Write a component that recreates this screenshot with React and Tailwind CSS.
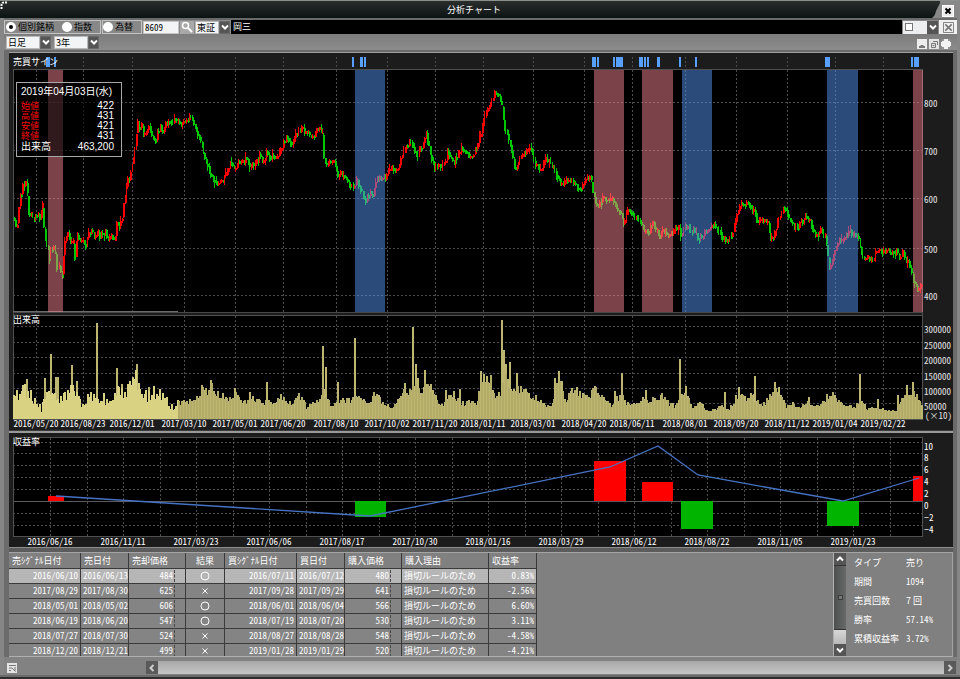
import React from "react";

const HALF =
  "[font-family:'Noto_Sans_CJK_JP',sans-serif] [font-feature-settings:'hwid']";
const GOTHIC = "[font-family:'Noto_Sans_CJK_JP',sans-serif]";
const PGOTHIC = "[font-family:'Liberation_Sans','Noto_Sans_CJK_JP',sans-serif]";

/* ---------- chart data (plot units) ---------- */

const PRICE_PATH = [
  [14, 218], [16, 228], [19, 205], [20, 195], [24, 185], [26, 182], [27, 200], [29, 220], [31, 215], [33, 225],
  [35, 217], [38, 213], [40, 218], [42, 208], [43, 222], [44, 240], [47, 248], [49, 260], [51, 250], [54, 242],
  [55, 265], [57, 272], [59, 265], [62, 275], [64, 242], [68, 236], [70, 240], [73, 245], [74, 260], [77, 234],
  [80, 240], [83, 245], [86, 248], [88, 236], [92, 232], [95, 240], [98, 232], [101, 236], [105, 230], [108, 238],
  [112, 238], [115, 236], [117, 220], [119, 225], [121, 222], [123, 210], [125, 192], [127, 180], [129, 178],
  [131, 168], [133, 162], [135, 140], [137, 122], [139, 128], [141, 125], [144, 135], [147, 128], [150, 128],
  [153, 142], [156, 138], [159, 127], [163, 132], [167, 120], [171, 122], [175, 118], [180, 125], [184, 120],
  [188, 118], [191, 117], [193, 122], [196, 132], [200, 138], [202, 148], [205, 158], [208, 168], [210, 175],
  [213, 178], [218, 185], [221, 182], [224, 178], [227, 170], [230, 162], [233, 165], [235, 172], [237, 160],
  [240, 165], [243, 162], [247, 158], [250, 170], [252, 165], [256, 160], [259, 155], [263, 165], [266, 148],
  [269, 158], [273, 155], [277, 155], [280, 150], [283, 143], [287, 137], [290, 143], [293, 140], [297, 133],
  [302, 128], [307, 133], [311, 138], [315, 133], [318, 130], [320, 128], [322, 133], [323, 155], [325, 165],
  [328, 163], [332, 160], [335, 165], [337, 178], [341, 173], [345, 180], [350, 185], [354, 186], [357, 178],
  [360, 190], [363, 198], [366, 200], [369, 192], [372, 196], [375, 182], [377, 177], [380, 180], [385, 177],
  [390, 170], [394, 168], [398, 170], [401, 156], [405, 148], [408, 143], [412, 142], [415, 155], [419, 150],
  [423, 143], [425, 132], [428, 142], [431, 158], [434, 167], [438, 165], [442, 168], [447, 153], [450, 158],
  [453, 163], [456, 157], [460, 148], [464, 150], [468, 155], [472, 155], [476, 148], [480, 133], [483, 122],
  [487, 110], [490, 103], [494, 95], [496, 91], [499, 95], [501, 103], [503, 124], [505, 130], [508, 140],
  [511, 150], [513, 162], [516, 172], [520, 155], [524, 155], [528, 148], [531, 150], [534, 163], [538, 168],
  [541, 168], [545, 158], [549, 163], [553, 166], [556, 177], [561, 183], [565, 182], [569, 177], [573, 182],
  [577, 187], [581, 190], [585, 180], [590, 178], [592, 190], [595, 202], [599, 205], [603, 198], [608, 200],
  [612, 198], [616, 208], [620, 215], [623, 223], [626, 212], [630, 212], [634, 214], [638, 220], [641, 225],
  [643, 230], [648, 232], [652, 224], [656, 228], [659, 236], [662, 230], [666, 234], [670, 236], [674, 228],
  [678, 227], [681, 235], [685, 225], [690, 232], [694, 230], [698, 240], [702, 235], [706, 232], [711, 225],
  [715, 224], [718, 232], [722, 238], [727, 240], [731, 238], [734, 225], [737, 210], [741, 205], [745, 203],
  [749, 207], [753, 208], [756, 220], [760, 222], [764, 220], [768, 225], [770, 238], [773, 240], [776, 225],
  [780, 213], [784, 209], [788, 215], [792, 225], [797, 228], [801, 222], [806, 215], [809, 220], [812, 232],
  [817, 236], [820, 231], [825, 238], [827, 252], [828, 262], [829, 270], [832, 258], [835, 248], [838, 240],
  [842, 238], [846, 235], [850, 232], [854, 235], [858, 236], [860, 252], [863, 258], [867, 256], [870, 262],
  [874, 256], [878, 252], [884, 252], [890, 252], [896, 252], [899, 258], [903, 252], [907, 262], [911, 272],
  [914, 285], [917, 290], [921, 284],
];

const VOLUME_PATH = [
  [13, 22], [20, 25], [26, 30], [30, 22], [36, 15], [40, 10], [45, 25], [50, 25], [55, 20], [60, 20], [65, 25],
  [72, 28], [77, 22], [80, 14], [86, 20], [92, 24], [97, 22], [103, 20], [108, 16], [114, 24], [120, 26],
  [126, 26], [132, 36], [136, 40], [140, 28], [146, 22], [152, 27], [158, 24], [164, 20], [168, 14], [172, 12],
  [178, 16], [184, 16], [190, 17], [196, 22], [201, 28], [206, 26], [210, 34], [214, 26], [220, 24], [226, 18],
  [232, 22], [236, 24], [242, 16], [250, 20], [256, 18], [262, 14], [268, 18], [274, 16], [280, 22], [286, 16],
  [292, 16], [298, 22], [302, 18], [306, 10], [312, 18], [318, 16], [322, 28], [326, 22], [330, 12], [336, 18],
  [342, 18], [350, 18], [355, 26], [360, 20], [366, 16], [372, 22], [376, 26], [380, 18], [386, 14], [392, 10],
  [397, 18], [402, 26], [408, 22], [412, 38], [416, 36], [420, 26], [424, 32], [430, 30], [436, 18], [440, 12],
  [446, 20], [452, 24], [458, 18], [464, 14], [470, 18], [476, 12], [480, 42], [484, 38], [490, 38], [494, 24],
  [500, 26], [504, 50], [508, 32], [514, 32], [520, 28], [526, 24], [532, 22], [540, 20], [546, 12], [552, 16],
  [556, 32], [560, 34], [564, 18], [570, 28], [576, 28], [582, 22], [588, 22], [594, 28], [600, 26], [606, 18],
  [610, 12], [616, 20], [622, 22], [626, 14], [632, 14], [638, 14], [642, 20], [650, 18], [656, 22], [662, 22],
  [668, 16], [674, 12], [680, 28], [686, 24], [692, 10], [698, 16], [704, 10], [710, 8], [716, 10], [722, 14],
  [728, 8], [734, 20], [738, 26], [744, 20], [750, 24], [756, 18], [762, 14], [768, 20], [774, 32], [780, 20],
  [786, 12], [792, 16], [798, 10], [806, 16], [812, 12], [820, 14], [826, 22], [830, 26], [836, 18], [842, 16],
  [848, 12], [854, 12], [860, 18], [866, 10], [872, 12], [880, 10], [888, 8], [896, 10], [902, 20], [908, 28],
  [914, 24], [922, 14],
];

const VOLUME_SPIKES = [
  [26, 40], [44, 41], [50, 65], [55, 42], [57, 42], [71, 54], [76, 38], [96, 96], [116, 51], [121, 35],
  [132, 42], [136, 55], [138, 36], [148, 32], [153, 30], [201, 34], [210, 39], [234, 31], [249, 27], [266, 37],
  [322, 73], [325, 52], [337, 37], [354, 81], [404, 36], [412, 92], [415, 55], [424, 49], [430, 35], [445, 29],
  [459, 30], [480, 48], [501, 99], [503, 69], [505, 55], [509, 57], [516, 46], [520, 33], [554, 41], [558, 48],
  [571, 31], [594, 33], [614, 28], [621, 46], [645, 29], [679, 60], [685, 33], [724, 27], [738, 32], [754, 43],
  [774, 37], [778, 32], [808, 22], [859, 45], [877, 20], [897, 24], [906, 34], [912, 37],
];

const BANDS = [
  [48, 15, "sell"], [355, 30, "buy"], [594, 30, "sell"], [642, 31, "sell"],
  [682, 30, "buy"], [827, 31, "buy"], [913, 10, "sell"],
];

const SIGNALS = [
  [46, 4], [54, 2], [352, 2], [360, 3], [364, 2], [592, 4], [597, 2], [613, 2], [616, 7], [639, 4], [644, 2],
  [647, 2], [657, 3], [679, 2], [695, 2], [825, 5], [911, 2], [914, 5],
];

const DATES = [
  [36, "2016/05/20"], [83, "2016/08/23"], [132, "2016/12/01"], [184, "2017/03/10"], [235, "2017/05/01"],
  [283, "2017/06/20"], [336, "2017/08/10"], [387, "2017/10/02"], [435, "2017/11/20"], [483, "2018/01/11"],
  [533, "2018/03/01"], [584, "2018/04/20"], [632, "2018/06/11"], [685, "2018/08/01"], [736, "2018/09/20"],
  [787, "2018/11/12"], [835, "2019/01/04"], [883, "2019/02/22"],
];

const PRICE_TICKS = [[102, "800"], [150, "700"], [198, "600"], [248, "500"], [295, "400"]];
const VOLUME_TICKS = [
  [326, "300000"], [342, "250000"], [357, "200000"], [373, "150000"], [388, "100000"], [403, "50000"],
];

const PROFIT_DATES = [
  "2016/06/16", "2016/11/11", "2017/03/23", "2017/06/06", "2017/08/17", "2017/10/30",
  "2018/01/16", "2018/03/29", "2018/06/12", "2018/08/22", "2018/11/05", "2019/01/23",
];
const PROFIT_TICKS = [
  [442, "10"], [453, "8"], [465, "6"], [477, "4"], [489, "2"], [501, "0"], [513, "−2"], [525, "−4"],
];
const PROFIT_BARS = [
  [48, 16, 496, 5, "#ff0000"], [355, 31, 501, 16, "#00b400"], [594, 32, 461, 40, "#ff0000"],
  [642, 31, 482, 19, "#ff0000"], [681, 32, 501, 28, "#00b400"], [827, 32, 501, 25, "#00b400"],
  [913, 10, 476, 25, "#ff0000"],
];

const TRADES = [
  ["2016/06/10", "2016/06/13", "484", "○", "2016/07/11", "2016/07/12", "480", "0.83%"],
  ["2017/08/29", "2017/08/30", "625", "×", "2017/09/28", "2017/09/29", "641", "-2.56%"],
  ["2018/05/01", "2018/05/02", "606", "○", "2018/06/01", "2018/06/04", "566", "6.60%"],
  ["2018/06/19", "2018/06/20", "547", "○", "2018/07/19", "2018/07/20", "530", "3.11%"],
  ["2018/07/27", "2018/07/30", "524", "×", "2018/08/27", "2018/08/28", "548", "-4.58%"],
  ["2018/12/20", "2018/12/21", "499", "×", "2019/01/28", "2019/01/29", "520", "-4.21%"],
];

/* ---------- series helpers ---------- */

function makeRandom(seed) {
  let s = seed;
  return () => {
    s = (s * 1664525 + 1013904223) % 4294967296;
    return s / 4294967296;
  };
}

function valueAt(points, x) {
  for (let i = 1; i < points.length; i += 1) {
    if (x <= points[i][0]) {
      const [x0, y0] = points[i - 1];
      const [x1, y1] = points[i];
      return y0 + ((y1 - y0) * (x - x0)) / (x1 - x0);
    }
  }
  return points[points.length - 1][1];
}

function buildCandles() {
  const rnd = makeRandom(8609);
  const out = [];
  let prev = PRICE_PATH[0][1];
  for (let x = 14; x < 922; x += 1.4) {
    const wild = x < 160 ? 9 : 6;
    const close = valueAt(PRICE_PATH, x) + (rnd() - 0.5) * wild;
    const open = close + (prev - close) * 0.8;
    const top = Math.min(open, close) - 0.5;
    const size = Math.max(2.5, Math.abs(close - open) + 1);
    const reach = rnd() > 0.7 ? 5 : 2;
    out.push({
      x: Math.round(x),
      top,
      size,
      high: top - rnd() * reach,
      low: top + size + rnd() * reach,
      up: close < prev,
      wide: rnd() > 0.12,
    });
    prev = close;
  }
  return out;
}

function buildVolume() {
  const rnd = makeRandom(1094);
  const out = [];
  for (let x = 13; x < 922; x += 1.5) {
    const noise = x < 178 ? 0.7 + rnd() * 0.62 : 0.85 + rnd() * 0.34;
    out.push([x, valueAt(VOLUME_PATH, x) * noise]);
  }
  return out;
}

const CANDLES = buildCandles();
const VOLUME = buildVolume();

const pct = (x) => `${((x - 13) / 910) * 100}%`;

/* ---------- charts ---------- */

function PriceChart() {
  return (
    <section className="flex bg-[#1c1c1c] pl-1">
      <div className="relative min-w-0 flex-1">
        <svg className="block h-[377px] w-full overflow-visible" role="img" aria-label="株価と出来高">
          <svg
            width="100%"
            height="377"
            viewBox="13 53 910 377"
            preserveAspectRatio="none"
            shapeRendering="crispEdges"
          >
            <rect x="13" y="70" width="910" height="242" fill="#000" />
            <rect x="13" y="316" width="910" height="103" fill="#000" />
            <g stroke="#4c4c4c" strokeDasharray="2 2">
              {DATES.map(([x]) => (
                <path key={x} d={`M${x + 0.5} 57V68M${x + 0.5} 70V312M${x + 0.5} 316V419`} />
              ))}
              {PRICE_TICKS.concat(VOLUME_TICKS).map(([y]) => (
                <path key={y} d={`M13 ${y + 0.5}H923`} />
              ))}
            </g>
            <path d="M13 69.5H923M13 315.5H923M13 419.5H923M13.5 69V420M922.5 69V420" stroke="#505050" />
            <path d="M13 312.5H923" stroke="#484848" />
            <path d="M13 311.5H178" stroke="#6c6c6c" />

            {CANDLES.map((c, i) => (
              <g key={i} fill={c.up ? "#ff0000" : "#00c800"}>
                <rect x={c.x} y={c.high} width="1" height={c.low - c.high} />
                <rect x={c.x} y={c.top} width={c.wide ? 2 : 1} height={c.size} />
              </g>
            ))}

            {BANDS.map(([x, w, kind]) => (
              <rect
                key={x}
                x={x}
                y="70"
                width={w}
                height="242"
                fill={kind === "sell" ? "#f88492" : "#5696f6"}
                fillOpacity="0.5"
              />
            ))}
            {SIGNALS.map(([x, w]) => (
              <rect key={x} x={x} y="57" width={w} height="10" fill="#57a0ff" />
            ))}

            {VOLUME_SPIKES.map(([x, h]) => (
              <rect key={`${x}-${h}`} x={x} y={419 - h} width="2" height={h} fill="#bdb670" />
            ))}
            {VOLUME.map(([x, h], i) => (
              <rect
                key={i}
                x={x}
                y={419 - h}
                width="2"
                height={h}
                fill={x < 178 ? "#d9d282" : i % 2 ? "#bdb670" : "#b3ac69"}
              />
            ))}
          </svg>
          <text x="0" y="12" className={`fill-white text-[9px] ${GOTHIC}`}>売買サイン</text>
          <text x="0" y="270" className={`fill-white text-[9px] ${GOTHIC}`}>出来高</text>
          {DATES.map(([x, label]) => (
            <text
              key={label}
              x={pct(x)}
              y="374"
              textAnchor="middle"
              className={`fill-white text-[9px] ${HALF}`}
            >
              {label}
            </text>
          ))}
        </svg>

        <dl
          className={`absolute top-[29px] left-[3px] grid w-[106px] grid-cols-[auto_1fr] border border-[#a8a8a8] bg-black/60 px-1 pt-[3px] pb-[4px] text-[10px] leading-[10px] text-white ${PGOTHIC}`}
        >
          <dt className="col-span-2 pb-1 leading-[11px] whitespace-nowrap">2019年04月03日(水)</dt>
          <dt className="text-[9px] text-[#ff0000]">始値</dt>
          <dd className="pr-[3px] text-right">422</dd>
          <dt className="text-[9px] text-[#ff0000]">高値</dt>
          <dd className="pr-[3px] text-right">431</dd>
          <dt className="text-[9px] text-[#ff0000]">安値</dt>
          <dd className="pr-[3px] text-right">421</dd>
          <dt className="text-[9px] text-[#ff0000]">終値</dt>
          <dd className="pr-[3px] text-right">431</dd>
          <dt className="leading-[11px]">出来高</dt>
          <dd className="pr-[3px] text-right leading-[11px]">463,200</dd>
        </dl>
      </div>
      <svg className="block h-[377px] w-[30px] shrink-0 overflow-hidden" aria-hidden="true">
        <g className={`fill-[#e4e4e4] text-[9px] ${HALF}`}>
          {PRICE_TICKS.map(([y, label]) => (
            <text key={label} x="1" y={y - 48}>{label}</text>
          ))}
          {VOLUME_TICKS.map(([y, label]) => (
            <text key={label} x="1" y={y - 46}>{label}</text>
          ))}
          <text x="2" y="366">(×10)</text>
        </g>
      </svg>
    </section>
  );
}

function ProfitChart() {
  return (
    <section className="flex bg-[#1c1c1c] pl-1">
      <svg className="block h-[114px] min-w-0 flex-1 overflow-visible" role="img" aria-label="収益率">
        <svg
          width="100%"
          height="114"
          viewBox="13 433 910 114"
          preserveAspectRatio="none"
          shapeRendering="crispEdges"
        >
          <rect x="13" y="437" width="910" height="100" fill="#000" />
          <g stroke="#4c4c4c" strokeDasharray="2 2">
            {Array.from({ length: 24 }, (_, i) => (
              <path key={i} d={`M${Math.round(50 + i * 36.5) + 0.5} 438V536`} />
            ))}
            {PROFIT_TICKS.map(([y]) => (
              <path key={y} d={`M13 ${y + 0.5}H923`} />
            ))}
          </g>
          <path d="M13 501.5H923" stroke="#5a5a5a" />
          <path d="M13.5 437.5H922.5V536.5H13.5Z" stroke="#505050" fill="none" />
          {PROFIT_BARS.map(([x, w, y, h, fill]) => (
            <rect key={x} x={x} y={y} width={w} height={h} fill={fill} />
          ))}
          <path
            d="M56 496L370 516L610 467L658 446L698 475L843 501L919 478"
            fill="none"
            stroke="#4673c4"
            strokeWidth="1.3"
            shapeRendering="auto"
          />
        </svg>
        <text x="0" y="12" className={`fill-white text-[9px] ${GOTHIC}`}>収益率</text>
        {PROFIT_DATES.map((label, i) => (
          <text
            key={label}
            x={pct(50 + i * 73)}
            y="112"
            textAnchor="middle"
            className={`fill-white text-[9px] ${HALF}`}
          >
            {label}
          </text>
        ))}
      </svg>
      <svg className="block h-[114px] w-[30px] shrink-0" aria-hidden="true">
        <g className={`fill-white text-[9px] ${HALF}`}>
          {PROFIT_TICKS.map(([y, label]) => (
            <text key={label} x="1" y={y - 425}>{label}</text>
          ))}
        </g>
      </svg>
    </section>
  );
}

/* ---------- controls ---------- */

function Chevron({ d = "M1 2.5L4 5.5L7 2.5", className = "text-white" }) {
  return (
    <svg viewBox="0 0 8 8" className={`size-2 ${className}`} aria-hidden="true">
      <path d={d} fill="none" stroke="currentColor" strokeWidth="2" />
    </svg>
  );
}

function Select({ label, options, width }) {
  return (
    <span className="flex h-[13px]">
      <select
        aria-label={label}
        className={`h-full appearance-none rounded-none border border-[#b8b8b8] bg-[#f2f4f6] p-0 px-px text-[9px] leading-[11px] text-black ${width} ${GOTHIC}`}
      >
        {options.map((o) => (
          <option key={o}>{o}</option>
        ))}
      </select>
      <span className="pointer-events-none flex h-full w-[11px] items-center justify-center border border-[#6a6a6a] bg-[#555]">
        <Chevron />
      </span>
    </span>
  );
}

function Radio({ label, checked }) {
  return (
    <label className="flex items-center gap-0.5">
      <input
        type="radio"
        name="market"
        defaultChecked={checked}
        className="size-[10px] appearance-none rounded-full border-[3px] border-white bg-white checked:bg-black"
      />
      {label}
    </label>
  );
}

function ToolIcon({ label, children }) {
  return (
    <button type="button" aria-label={label} className="size-[10px]">
      <svg viewBox="0 0 10 10" className="size-[10px]" fill="none">
        {children}
      </svg>
    </button>
  );
}

/* ---------- table ---------- */

const HEADERS = ["売ｼｸﾞﾅﾙ日付", "売日付", "売却価格", "結果", "買ｼｸﾞﾅﾙ日付", "買日付", "購入価格", "購入理由", "収益率"];

function Price({ value }) {
  return (
    <span className="mr-2 block border-r border-dashed border-[#4a4a4a] pr-px text-right">{value}</span>
  );
}

function TradeTable() {
  const cell = "border-r border-b border-[#3a3a3a] px-0.5 py-0";
  return (
    <table
      className={`h-[106px] w-[528px] shrink-0 table-fixed border-separate border-spacing-0 text-[9px] leading-[12px] whitespace-nowrap text-white ${HALF}`}
    >
      <colgroup>
        <col className="w-[72px]" />
        <col className="w-[48px]" />
        <col className="w-[57px]" />
        <col className="w-[39px]" />
        <col className="w-[72px]" />
        <col className="w-[48px]" />
        <col className="w-[57px]" />
        <col className="w-[87px]" />
        <col className="w-[48px]" />
      </colgroup>
      <thead>
        <tr className="h-[16px]">
          {HEADERS.map((h) => (
            <th
              key={h}
              scope="col"
              className={`border-r border-b border-[#3a3a3a] bg-[#808080] px-[3px] py-0 font-normal [font-feature-settings:normal] ${h === "結果" ? "text-center" : "text-left"}`}
            >
              {h}
            </th>
          ))}
        </tr>
      </thead>
      <tbody>
        {TRADES.map(([sig, sell, sellPrice, mark, buySig, buy, buyPrice, rate], i) => (
          <tr key={sig} className={i === 0 ? "bg-[#b6b6b6]" : "bg-[#848484]"}>
            <td className={`${cell} text-right`}>{sig}</td>
            <td className={`${cell} text-right`}>{sell}</td>
            <td className={cell}><Price value={sellPrice} /></td>
            <td className={`${cell} text-center`}>
              <svg viewBox="0 0 10 10" className="mx-auto size-[10px]" fill="none" stroke="currentColor" role="img" aria-label={mark}>
                {mark === "○" ? <circle cx="5" cy="5" r="4" /> : <path d="M2.5 2.5L7.5 7.5M7.5 2.5L2.5 7.5" />}
              </svg>
            </td>
            <td className={`${cell} text-right`}>{buySig}</td>
            <td className={`${cell} text-right`}>{buy}</td>
            <td className={cell}><Price value={buyPrice} /></td>
            <td className={`${cell} [font-feature-settings:normal]`}>損切ルールのため</td>
            <td className={`${cell} text-right`}>{rate}</td>
          </tr>
        ))}
      </tbody>
    </table>
  );
}

function Stats() {
  const rows = [
    ["タイプ", "売り"],
    ["期間", "1094"],
    ["売買回数", "7 回"],
    ["勝率", "57.14%"],
    ["累積収益率", "3.72%"],
  ];
  return (
    <dl className={`grid w-[106px] shrink-0 auto-rows-[19px] grid-cols-[52px_1fr] items-center pl-2 text-[9px] text-white ${GOTHIC}`}>
      {rows.map(([k, v]) => (
        <React.Fragment key={k}>
          <dt className="whitespace-nowrap">{k}</dt>
          <dd className={/^[0-9.]+%?$/.test(v) ? HALF : ""}>{v}</dd>
        </React.Fragment>
      ))}
    </dl>
  );
}

/* ---------- window ---------- */

export default function App() {
  return (
    <div className={`flex min-h-screen flex-col bg-[#6b6b6b] ${GOTHIC}`}>
      <header className="flex h-[18px] items-stretch border-t border-[#8a8f8c] bg-linear-to-b from-[#2a2e2d] to-[#0c1413] text-white">
        <svg viewBox="0 0 10 10" className="size-[10px]" aria-hidden="true">
          <path d="M1.5 8V4Q1.5 1.5 4 1.5H7" fill="none" stroke="#fff" strokeWidth="2" strokeDasharray="2 1" />
        </svg>
        <h1 className="flex-1 pl-1.5 text-center text-[9px] leading-[18px]">分析チャート</h1>
        <svg viewBox="0 0 8 17" className="h-[17px] w-2" aria-hidden="true">
          <path d="M0 17Q3 15 4 10L8 2V17Z" fill="#888" />
        </svg>
        <div className="flex w-5 items-center bg-[#888] pt-0.5 pl-0.5">
          <button type="button" aria-label="閉じる" className="flex size-[12px] items-center justify-center border border-white bg-[#eee] text-black">
            <svg viewBox="0 0 8 8" className="size-2">
              <path d="M1.5 1.5L6.5 6.5M6.5 1.5L1.5 6.5" stroke="currentColor" strokeWidth="2" />
            </svg>
          </button>
        </div>
      </header>

      <div className="flex flex-1 flex-col border-r-[3px] border-l-4 border-[#868686]">
        <div className="flex h-4 items-center gap-px border-t-2 border-[#6a6a6a] bg-[#888] text-[9px] leading-[12px] text-black">
          <fieldset className="flex h-[14px] w-[97px] items-center gap-2 border border-[#c4c4c4] pl-px whitespace-nowrap">
            <Radio label="個別銘柄" checked />
            <Radio label="指数" />
          </fieldset>
          <fieldset className="flex h-[14px] w-[40px] items-center border border-[#c4c4c4] whitespace-nowrap">
            <Radio label="為替" />
          </fieldset>
          <input
            aria-label="銘柄コード"
            defaultValue="8609"
            className={`h-[13px] w-9 border border-[#c4c4c4] bg-[#f2f4f6] px-px text-[9px] text-black ${HALF}`}
          />
          <button type="button" aria-label="検索" className="flex h-[13px] w-[14px] items-center justify-center bg-[#a8a8a8]">
            <svg viewBox="0 0 12 12" className="size-3" fill="none" stroke="#fff">
              <circle cx="4.5" cy="4.5" r="3" strokeWidth="1.5" />
              <path d="M7 7L11 11" strokeWidth="2" />
            </svg>
          </button>
          <Select label="市場" options={["東証"]} width="w-6" />
          <output className="h-[14px] flex-1 bg-black pl-0.5 leading-[13px] text-white">岡三</output>
          <span className="flex h-[13px]">
            <button type="button" aria-label="表示色" className="flex h-full w-6 items-center bg-[#eceef0] pl-0.5">
              <span className="size-2 border border-[#777] bg-white" />
            </button>
            <span className="flex h-full w-[11px] items-center justify-center bg-[#555]">
              <Chevron />
            </span>
          </span>
          <button type="button" aria-label="削除" className="flex h-[14px] w-[18px] items-center justify-center bg-[#f0f0f0]">
            <svg viewBox="0 0 12 12" className="size-[11px]" fill="none" stroke="#777">
              <path d="M.5.5H11.5V11.5H.5Z" />
              <path d="M2.5 2.5L9.5 9.5M9.5 2.5L2.5 9.5" strokeWidth="1.8" />
            </svg>
          </button>
        </div>

        <div className="flex h-4 items-center gap-[3px] bg-linear-to-b from-[#7c7c7c] to-[#8c8c8c] pr-1.5 pl-0.5">
          <Select label="足種" options={["日足"]} width="w-[34px]" />
          <Select label="期間" options={["3年"]} width="w-[34px]" />
          <div className="ml-auto flex gap-0.5 pt-1">
            <ToolIcon label="最小化">
              <path d="M0 0H10V10H0Z" fill="#ededed" />
              <path d="M2 9V7H3.5V6H6.5V7H8V9Z" fill="#7a7a7a" />
            </ToolIcon>
            <ToolIcon label="切り離し">
              <path d="M0 0H10V10H0Z" fill="#e4e4e4" />
              <path d="M2.5 4.5H6.5V8.5H2.5ZM4 2.5H8.5V6M3.5 6.5H5.5" stroke="#777" />
            </ToolIcon>
            <ToolIcon label="最大化">
              <path d="M1 0H9V10H1Z" fill="#f2f2f2" />
              <path d="M0 3H1V7H0ZM9 3H10V7H9Z" fill="#f2f2f2" />
              <path d="M1 1H3M7 1H9M1 9H3M7 9H9" stroke="#777" strokeWidth="1.5" />
            </ToolIcon>
          </div>
        </div>

        <main className="flex flex-1 flex-col bg-[#6b6b6b] pt-0.5 pr-1 pl-[5px]">
          <div className="border-t border-[#a0a0a0]">
            <PriceChart />
            <div className="h-[3px] border-t border-[#3a3a3a] bg-[#999]" />
            <ProfitChart />
          </div>

          <div className="h-[5px] border-t border-[#8c8c8c] bg-[#5c5c5c]" />
          <section className="flex h-[105px] overflow-hidden border-t border-r border-b border-[#a4a4a4] border-b-[#b0b0b0] bg-[#808080]">
            <TradeTable />
            <div className="flex-1" />
            <div className="flex w-[13px] shrink-0 flex-col border-l border-[#b0b0b0] bg-[#5a5c5c]">
              <button type="button" aria-label="上へ" className="flex h-[12px] items-center justify-center bg-[#555]">
                <Chevron d="M1 5.5L4 2.5L7 5.5" />
              </button>
              <div className="flex flex-1 items-center justify-center border-y border-[#333] bg-linear-to-r from-[#4e5050] to-[#686a6a]">
                <span className="size-[5px] border border-[#3c3c3c] bg-[#777]" />
              </div>
              <div className="h-[14px] bg-linear-to-b from-[#d8d8d8] to-[#b8b8b8]" />
              <button type="button" aria-label="下へ" className="flex h-[12px] items-center justify-center bg-[#555]">
                <Chevron />
              </button>
            </div>
            <Stats />
          </section>
        </main>

        <footer className="flex h-[18px] items-center bg-[#828282] pt-[3px] pr-px pl-[3px]">
          <div className="w-[139px] shrink-0">
            <button type="button" aria-label="一覧" className="block size-[10px] bg-[#e4e4e4]">
              <svg viewBox="0 0 10 10" className="size-[10px]" fill="none" stroke="#777">
                <path d="M2 2.5H9M2 5H5L8.5 8.5M2 7.5H4M8 4V8" />
              </svg>
            </button>
          </div>
          <button type="button" aria-label="左へ" className="flex h-[13px] w-3 items-center justify-center bg-[#5a5a5a]">
            <Chevron d="M5.5 1L2.5 4L5.5 7" className="text-[#ccc]" />
          </button>
          <div className="h-[13px] flex-1 bg-linear-to-b from-[#a8a8a8] to-[#c6c6c6]" />
          <button type="button" aria-label="右へ" className="flex h-[13px] w-3 items-center justify-center bg-[#5a5a5a]">
            <Chevron d="M2.5 1L5.5 4L2.5 7" className="text-[#ccc]" />
          </button>
        </footer>
      </div>
      <div className="h-1 border-b-2 border-[#2e2e2e] bg-[#6a6a6a]" />
    </div>
  );
}
